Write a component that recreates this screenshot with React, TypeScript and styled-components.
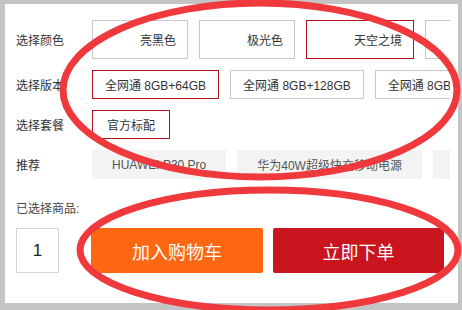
import React from "react";
import styled, { createGlobalStyle } from "styled-components";

const Global = createGlobalStyle`
  html, body { margin: 0; padding: 0; background: #c4c4c4; }
  body { font-family: "Liberation Sans", "Noto Sans CJK SC", sans-serif; }
`;

const Root = styled.div`
  position: relative;
  width: 462px;
  height: 310px;
  overflow: hidden;
  background: #c4c4c4;
`;

const Panel = styled.div`
  margin: 4px 0 0 5px;
  width: 453px;
  height: 299px;
  overflow: hidden;
  background: #fff;
  padding: 16px 8px 0 11px;
  box-sizing: border-box;
  font-size: 12px;
  color: #333;
`;

const Spec = styled.div`
  display: grid;
  grid-template-columns: 76px minmax(0, 1fr);
  row-gap: 11px;
  align-items: center;
  width: 434px;
`;

const Label = styled.div`
  font-size: 12px;
  color: #333;
  white-space: nowrap;
`;

const Options = styled.div`
  display: flex;
  gap: 11px;
  overflow: hidden;
  min-width: 0;
`;

const Option = styled.div<{ $selected?: boolean; $tall?: boolean; $img?: boolean }>`
  flex-shrink: 0;
  box-sizing: border-box;
  height: ${(p) => (p.$tall ? 39 : 29)}px;
  min-width: ${(p) => (p.$img ? 96 : 78)}px;
  padding: ${(p) => (p.$img ? "0 11px 0 47px" : "0 12px")};
  border: 1px solid ${(p) => (p.$selected ? "#b3121d" : "#c9c9c9")};
  display: flex;
  align-items: center;
  justify-content: ${(p) => (p.$img ? "flex-start" : "center")};
  white-space: nowrap;
  color: #333;
  font-size: 12px;
  background: #fff;
`;

const Recommend = styled.div`
  flex-shrink: 0;
  height: 29px;
  min-width: 60px;
  box-sizing: border-box;
  padding: 0 20px;
  background: #f3f3f3;
  display: flex;
  align-items: center;
  white-space: nowrap;
  color: #555;
  font-size: 12px;
`;

const Chosen = styled.div`
  margin-top: 21px;
  line-height: 18px;
  color: #444;
  font-size: 12px;
`;

const Actions = styled.div`
  margin-top: 10px;
  display: flex;
  align-items: center;
  gap: 10px;
`;

const Qty = styled.input`
  flex-shrink: 0;
  box-sizing: border-box;
  width: 43px;
  height: 45px;
  border: 1px solid #d6d6d6;
  text-align: center;
  font-family: "Liberation Sans", sans-serif;
  font-size: 17px;
  color: #222;
  margin: 0 22px 0 0;
  padding: 0;
  outline: none;
`;

const Btn = styled.button<{ $bg: string; $w: number }>`
  flex-shrink: 0;
  width: ${(p) => p.$w}px;
  height: 45px;
  border: none;
  border-radius: 2px;
  background: ${(p) => p.$bg};
  color: #fff;
  font-family: "Liberation Sans", "Noto Sans CJK SC", sans-serif;
  font-size: 18px;
  padding: 0;
  cursor: pointer;
`;

const Overlay = styled.svg`
  position: absolute;
  left: 0;
  top: 0;
  pointer-events: none;
`;

export default function App() {
  return (
    <Root>
      <Global />
      <Panel>
        <Spec>
          <Label>选择颜色</Label>
          <Options>
            <Option $tall $img>亮黑色</Option>
            <Option $tall $img>极光色</Option>
            <Option $tall $img $selected>天空之境</Option>
            <Option $tall $img />
          </Options>
          <Label>选择版本</Label>
          <Options>
            <Option $selected>全网通 8GB+64GB</Option>
            <Option>全网通 8GB+128GB</Option>
            <Option>全网通 8GB</Option>
          </Options>
          <Label>选择套餐</Label>
          <Options>
            <Option $selected>官方标配</Option>
          </Options>
          <Label>推荐</Label>
          <Options>
            <Recommend>HUAWEI P30 Pro</Recommend>
            <Recommend>华为40W超级快充移动电源</Recommend>
            <Recommend />
          </Options>
        </Spec>
        <Chosen>已选择商品:</Chosen>
        <Actions>
          <Qty readOnly value="1" />
          <Btn $bg="#fe6711" $w={172}>加入购物车</Btn>
          <Btn $bg="#c8151e" $w={171}>立即下单</Btn>
        </Actions>
      </Panel>
      <Overlay width="462" height="310" viewBox="0 0 462 310">
        <ellipse cx="260" cy="90" rx="197" ry="87" fill="none" stroke="#f0393c" strokeWidth="7" />
        <ellipse cx="269" cy="250" rx="189" ry="60" fill="none" stroke="#f0393c" strokeWidth="7" />
      </Overlay>
    </Root>
  );
}
